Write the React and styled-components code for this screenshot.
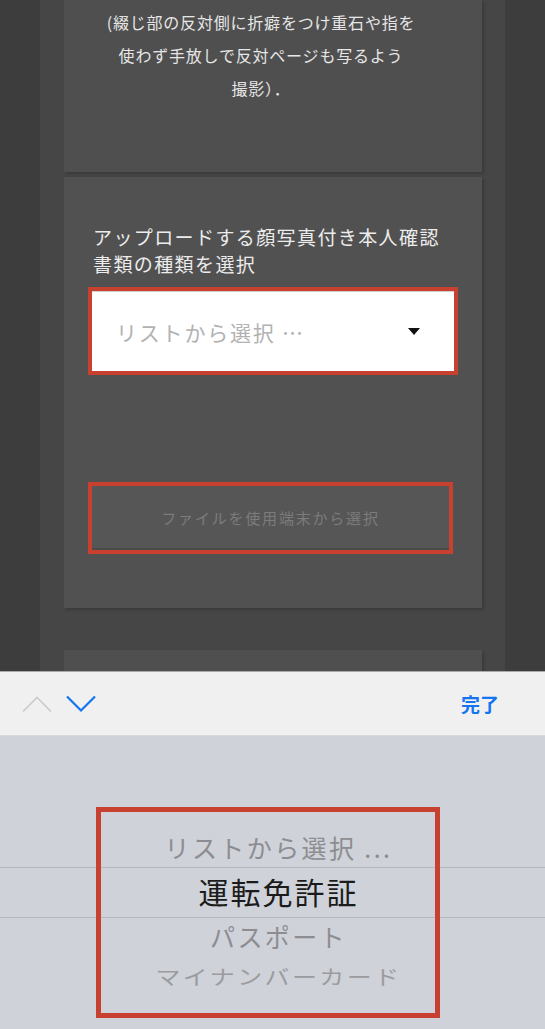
import React from 'react'
import styled, { createGlobalStyle } from 'styled-components'

const GlobalStyle = createGlobalStyle`
  html, body {
    margin: 0;
    height: 100%;
  }
  body {
    font-family: "Noto Sans CJK JP", "Noto Sans", sans-serif;
    background: #3d3d3d;
  }
  #root {
    height: 100%;
  }
`

const pickerItems = [
  { label: 'リストから選択 ...', kind: 'near' },
  { label: '運転免許証', kind: 'selected' },
  { label: 'パスポート', kind: 'near' },
  { label: 'マイナンバーカード', kind: 'far' },
]

const App = () => {
  return (
    <Screen>
      <GlobalStyle />
      <Page>
        <Column>
          <NoteCard>
            <NoteText>
              (綴じ部の反対側に折癖をつけ重石や指を<br />
              使わず手放しで反対ページも写るよう<br />
              撮影）．
            </NoteText>
          </NoteCard>

          <UploadCard>
            <FieldLabel>
              アップロードする顔写真付き本人確認<br />
              書類の種類を選択
            </FieldLabel>
            <SelectFrame>
              <SelectBox>
                <Placeholder>リストから選択 …</Placeholder>
                <Caret />
              </SelectBox>
            </SelectFrame>
            <FileFrame>
              <FileButton>ファイルを使用端末から選択</FileButton>
            </FileFrame>
          </UploadCard>

          <NextCard />
        </Column>
      </Page>

      <Toolbar>
        <NavArrows>
          <svg width="30" height="18" viewBox="0 0 30 18">
            <polyline points="1,16.5 15,2.5 29,16.5" fill="none" stroke="#cacaca" strokeWidth="1.6" />
          </svg>
          <svg width="30" height="18" viewBox="0 0 30 18">
            <polyline points="1,1.5 15,15.5 29,1.5" fill="none" stroke="#1474f2" strokeWidth="2.2" />
          </svg>
        </NavArrows>
        <DoneButton>完了</DoneButton>
      </Toolbar>

      <Picker>
        <Row $kind={pickerItems[0].kind}>{pickerItems[0].label}</Row>
        <Band>
          <Row $kind={pickerItems[1].kind}>{pickerItems[1].label}</Row>
        </Band>
        <Row $kind={pickerItems[2].kind}>{pickerItems[2].label}</Row>
        <Row $kind={pickerItems[3].kind}>{pickerItems[3].label}</Row>
        <PickerMark />
      </Picker>
    </Screen>
  )
}

export default App

const Screen = styled.div`
  height: 100vh;
  display: flex;
  flex-direction: column;
  overflow: hidden;
`

const Page = styled.div`
  flex: 1;
  min-height: 0;
  overflow: hidden;
  background: #3d3d3d;
  padding: 0 40px;
`

const Column = styled.div`
  height: 100%;
  background: #464646;
  padding: 0 23px 0 24px;
`

const Card = styled.div`
  background: #4f4f4f;
  box-shadow: 2px 2px 3px rgba(0, 0, 0, 0.18);
`

const NoteCard = styled(Card)`
  padding: 6px 44px 67px 20px;
`

const NoteText = styled.p`
  margin: 0;
  text-align: center;
  color: #e6e6e6;
  font-size: 16px;
  line-height: 33px;
  letter-spacing: 0.8px;
`

const UploadCard = styled(Card)`
  margin-top: 5px;
  background: #515151;
  padding: 46px 24px 54px;
`

const FieldLabel = styled.div`
  padding: 0 5px;
  color: #ececec;
  font-size: 19px;
  line-height: 27px;
  letter-spacing: 1.4px;
`

const Highlight = styled.div`
  box-sizing: border-box;
  border: 4px solid #c8402f;
`

const SelectFrame = styled(Highlight)`
  margin-top: 10px;
  height: 88px;
`

const SelectBox = styled.div`
  height: 100%;
  box-sizing: border-box;
  background: #fff;
  border-top: 1px solid #cfcfcf;
  display: flex;
  align-items: center;
  justify-content: space-between;
  padding: 0 34px 0 24px;
`

const Placeholder = styled.span`
  color: #b2b2b2;
  font-size: 21px;
  letter-spacing: 1.8px;
`

const Caret = styled.span`
  width: 0;
  height: 0;
  border-left: 6px solid transparent;
  border-right: 6px solid transparent;
  border-top: 7px solid #111;
`

const FileFrame = styled(Highlight)`
  margin-top: 107px;
  width: 365px;
  height: 72px;
`

const FileButton = styled.div`
  height: 100%;
  display: flex;
  align-items: center;
  justify-content: center;
  background: #565656;
  border-bottom: 2px solid #4a4a4a;
  box-sizing: border-box;
  color: #7c7c7c;
  font-size: 15px;
  letter-spacing: 1.8px;
`

const NextCard = styled(Card)`
  margin-top: 42px;
  height: 60px;
`

const Toolbar = styled.div`
  height: 65px;
  box-sizing: border-box;
  flex-shrink: 0;
  background: #f0f0f1;
  border-top: 1px solid #a9a9a9;
  border-bottom: 1px solid #d8d9db;
  display: flex;
  align-items: center;
  justify-content: space-between;
  padding: 0 46px 0 22px;
`

const NavArrows = styled.div`
  display: flex;
  gap: 14px;
  align-items: center;
  margin-top: 1px;
`

const DoneButton = styled.span`
  color: #1474f2;
  font-size: 19px;
  font-weight: 700;
  letter-spacing: 0;
`

const Picker = styled.div`
  position: relative;
  flex-shrink: 0;
  height: 293px;
  box-sizing: border-box;
  background: #cfd2d8;
  padding-top: 95px;
`

const rowStyles = {
  near: 'height: 36px; font-size: 25px; color: #8d8d91; letter-spacing: 2.4px;',
  selected: 'height: 49px; font-size: 30px; color: #1b1b1b; letter-spacing: 2px;',
  far: 'height: 40px; font-size: 25px; color: #9c9ca0; letter-spacing: 2.4px; transform: scaleY(0.82);',
}

// wheel rows: the glyphs sit a little low in their line box, so lift them
const Row = styled.div`
  box-sizing: border-box;
  display: flex;
  align-items: center;
  justify-content: center;
  padding: 0 0 4px 12px;
  line-height: 1;
  ${p => rowStyles[p.$kind]}
`

const Band = styled.div`
  border-top: 1px solid #b4b7bc;
  border-bottom: 1px solid #b4b7bc;
  & + div {
    height: 40px;
  }
`

const PickerMark = styled(Highlight)`
  position: absolute;
  left: 96px;
  top: 71px;
  width: 344px;
  height: 211px;
  border-width: 5px;
`
